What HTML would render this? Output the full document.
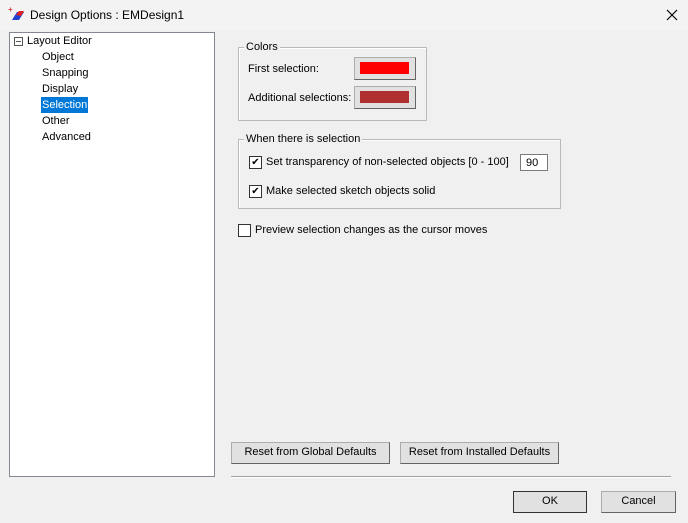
<!DOCTYPE html><html><head><style>
body{margin:0;width:688px;height:523px;background:#f0f0f0;font-family:"Liberation Sans",sans-serif;font-size:11px;color:#000;position:relative;overflow:hidden}
.a{position:absolute;white-space:nowrap}
.title{left:0;top:0;width:688px;height:30px;background:#f3f3f3}
.tree{left:9px;top:32px;width:204px;height:443px;background:#fff;border:1px solid #828790}
.grp{border:1px solid #b9b9b9;box-shadow:1px 1px 0 #fff inset}
.lg{background:#f0f0f0;padding:0 2px}
.btn{background:#e1e1e1;border:1px solid #adadad;border-right-color:#646464;border-bottom-color:#646464;box-sizing:border-box;text-align:center;line-height:19px}
.cb{width:11px;height:11px;border:1px solid #333;background:#fff;font-size:10px;line-height:11px;text-align:center}
</style></head><body>
<div class="a title"></div>
<svg class="a" style="left:8px;top:6px" width="18" height="18"><text x="0" y="6" font-size="8" fill="#c00">+</text><path d="M4 14 L9 6 L16 6 L11 14Z" fill="#2040d0"/><path d="M8 9 L11 5 L16 5 L13 10Z" fill="#e02020"/></svg>
<div class="a" style="left:30px;top:8px;font-size:12px">Design Options : EMDesign1</div>
<svg class="a" style="left:666px;top:9px" width="12" height="12"><path d="M1 1L11 11M11 1L1 11" stroke="#000" stroke-width="1.2"/></svg>
<div class="a tree"></div>
<div class="a" style="left:14px;top:37px;width:7px;height:7px;border:1px solid #555"></div>
<div class="a" style="left:16px;top:41px;width:5px;height:1px;background:#555"></div>
<div class="a" style="left:27px;top:35px">Layout Editor</div>
<div class="a" style="left:42px;top:51px">Object</div>
<div class="a" style="left:42px;top:67px">Snapping</div>
<div class="a" style="left:42px;top:83px">Display</div>
<div class="a" style="left:41px;top:97px;width:47px;height:16px;background:#0078d7"></div>
<div class="a" style="left:42px;top:99px;color:#fff">Selection</div>
<div class="a" style="left:42px;top:115px">Other</div>
<div class="a" style="left:42px;top:131px">Advanced</div>

<div class="a grp" style="left:238px;top:47px;width:187px;height:72px"></div>
<div class="a lg" style="left:244px;top:41px">Colors</div>
<div class="a" style="left:248px;top:63px">First selection:</div>
<div class="a btn" style="left:354px;top:57px;width:62px;height:23px"></div>
<div class="a" style="left:360px;top:62px;width:49px;height:12px;background:#ff0000"></div>
<div class="a" style="left:248px;top:92px">Additional selections:</div>
<div class="a btn" style="left:354px;top:86px;width:62px;height:23px"></div>
<div class="a" style="left:360px;top:91px;width:49px;height:12px;background:#b03030"></div>

<div class="a grp" style="left:238px;top:139px;width:321px;height:68px"></div>
<div class="a lg" style="left:244px;top:133px">When there is selection</div>
<div class="a cb" style="left:249px;top:156px">✔</div>
<div class="a" style="left:266px;top:156px">Set transparency of non-selected objects [0 - 100]</div>
<div class="a" style="left:520px;top:154px;width:28px;height:17px;background:#fff;border:1px solid #7a7a7a;box-sizing:border-box;padding:2px 0 0 5px">90</div>
<div class="a cb" style="left:249px;top:185px">✔</div>
<div class="a" style="left:266px;top:185px">Make selected sketch objects solid</div>

<div class="a cb" style="left:238px;top:224px"></div>
<div class="a" style="left:255px;top:224px">Preview selection changes as the cursor moves</div>

<div class="a btn" style="left:231px;top:442px;width:159px;height:22px">Reset from Global Defaults</div>
<div class="a btn" style="left:400px;top:442px;width:159px;height:22px">Reset from Installed Defaults</div>
<div class="a" style="left:231px;top:476px;width:440px;height:1px;background:#a0a0a0;border-bottom:1px solid #fff"></div>
<div class="a btn" style="left:513px;top:491px;width:74px;height:22px;border:1px solid #333">OK</div>
<div class="a btn" style="left:601px;top:491px;width:75px;height:22px">Cancel</div>
</body></html>
